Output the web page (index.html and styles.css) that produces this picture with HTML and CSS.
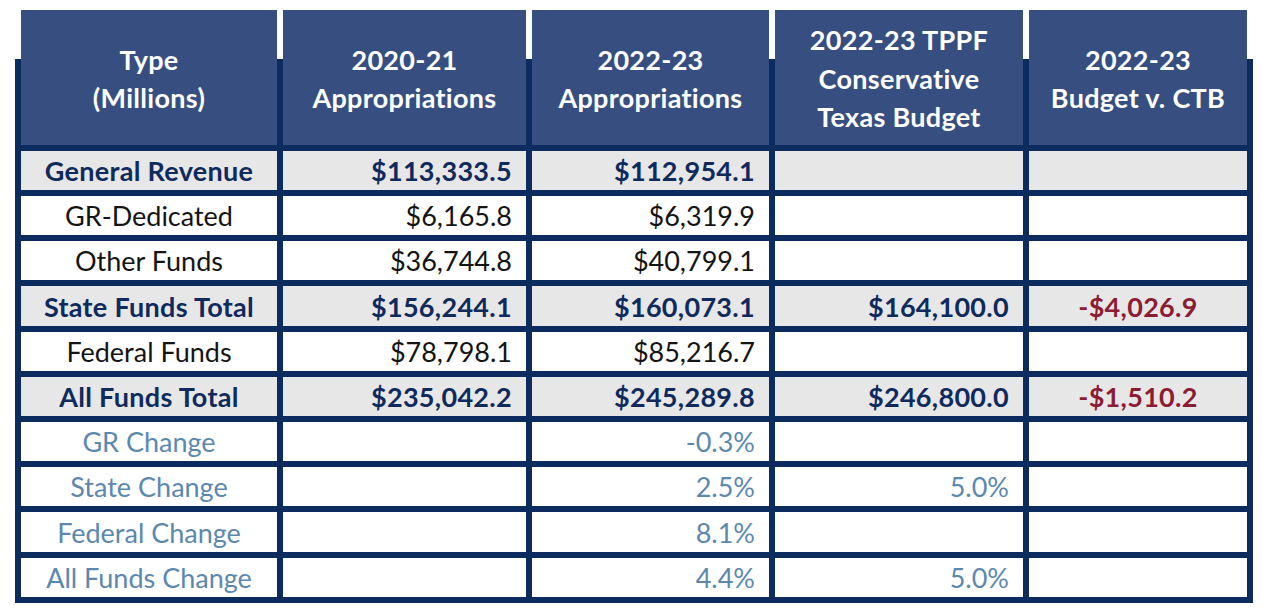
FILE: index.html
```html
<!DOCTYPE html>
<html lang="en">
<head>
<meta charset="utf-8">
<title>Texas Budget Comparison</title>
<link rel="stylesheet" href="styles.css">
</head>
<body>
<div class="table">
  <div class="hd">Type<br>(Millions)</div>
  <div class="hd">2020-21<br>Appropriations</div>
  <div class="hd">2022-23<br>Appropriations</div>
  <div class="hd">2022-23 TPPF<br>Conservative<br>Texas Budget</div>
  <div class="hd">2022-23<br>Budget v. CTB</div>

  <div class="c lbl tot">General Revenue</div>
  <div class="c num tot">$113,333.5</div>
  <div class="c num tot">$112,954.1</div>
  <div class="c num tot"></div>
  <div class="c ctr tot"></div>

  <div class="c lbl">GR-Dedicated</div>
  <div class="c num">$6,165.8</div>
  <div class="c num">$6,319.9</div>
  <div class="c num"></div>
  <div class="c ctr"></div>

  <div class="c lbl">Other Funds</div>
  <div class="c num">$36,744.8</div>
  <div class="c num">$40,799.1</div>
  <div class="c num"></div>
  <div class="c ctr"></div>

  <div class="c lbl tot">State Funds Total</div>
  <div class="c num tot">$156,244.1</div>
  <div class="c num tot">$160,073.1</div>
  <div class="c num tot">$164,100.0</div>
  <div class="c ctr tot neg">-$4,026.9</div>

  <div class="c lbl">Federal Funds</div>
  <div class="c num">$78,798.1</div>
  <div class="c num">$85,216.7</div>
  <div class="c num"></div>
  <div class="c ctr"></div>

  <div class="c lbl tot">All Funds Total</div>
  <div class="c num tot">$235,042.2</div>
  <div class="c num tot">$245,289.8</div>
  <div class="c num tot">$246,800.0</div>
  <div class="c ctr tot neg">-$1,510.2</div>

  <div class="c lbl chg">GR Change</div>
  <div class="c num chg"></div>
  <div class="c num chg">-0.3%</div>
  <div class="c num chg"></div>
  <div class="c ctr chg"></div>

  <div class="c lbl chg">State Change</div>
  <div class="c num chg"></div>
  <div class="c num chg">2.5%</div>
  <div class="c num chg">5.0%</div>
  <div class="c ctr chg"></div>

  <div class="c lbl chg">Federal Change</div>
  <div class="c num chg"></div>
  <div class="c num chg">8.1%</div>
  <div class="c num chg"></div>
  <div class="c ctr chg"></div>

  <div class="c lbl chg">All Funds Change</div>
  <div class="c num chg"></div>
  <div class="c num chg">4.4%</div>
  <div class="c num chg">5.0%</div>
  <div class="c ctr chg"></div>
</div>
</body>
</html>
```

FILE: styles.css
```css
html, body {
  margin: 0;
  padding: 0;
  background: #ffffff;
}

body {
  font-family: Lato, "Open Sans", "Liberation Sans", sans-serif;
}

.table {
  margin: 10px 0 0 15px;
  width: 1238px;
  box-sizing: border-box;
  display: grid;
  grid-template-columns: 256px 243px 237px 248px 218px;
  grid-template-rows: 135px 39px 39px 39px 40px 39px 39px 39px 39px 40px 39px;
  gap: 6px;
  padding: 0 6px 6px 6px;
  background: linear-gradient(to bottom, #ffffff 0, #ffffff 49px, #0c2b5f 49px, #0c2b5f 100%);
}

.hd {
  background: #374e80;
  color: #ffffff;
  font-weight: 700;
  font-size: 27px;
  letter-spacing: 0.3px;
  line-height: 38.5px;
  display: flex;
  align-items: center;
  justify-content: center;
  text-align: center;
  padding-top: 3px;
}

.c {
  background: #ffffff;
  color: #141414;
  font-size: 27px;
  display: flex;
  align-items: center;
  white-space: nowrap;
}

.lbl {
  justify-content: center;
}

.num {
  justify-content: flex-end;
  padding-right: 14px;
}

.ctr {
  justify-content: center;
}

.tot {
  background: #e7e7e8;
  color: #0f2a5c;
  font-weight: 700;
  letter-spacing: 0.3px;
}

.neg {
  color: #8c1c33;
}

.chg {
  color: #5c88ae;
}
```
